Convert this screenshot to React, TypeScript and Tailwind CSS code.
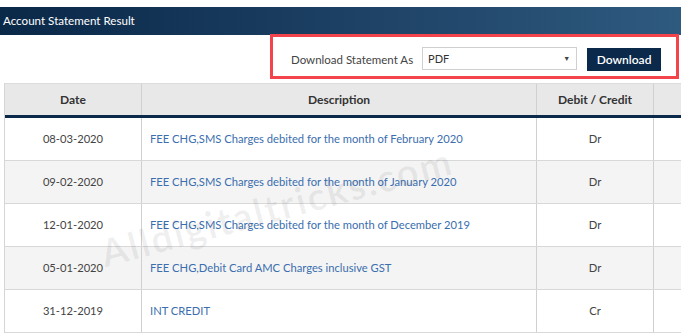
const rows = [
  { date: "08-03-2020", desc: "FEE CHG,SMS Charges debited for the month of February 2020", type: "Dr" },
  { date: "09-02-2020", desc: "FEE CHG,SMS Charges debited for the month of January 2020", type: "Dr" },
  { date: "12-01-2020", desc: "FEE CHG,SMS Charges debited for the month of December 2019", type: "Dr" },
  { date: "05-01-2020", desc: "FEE CHG,Debit Card AMC Charges inclusive GST", type: "Dr" },
  { date: "31-12-2019", desc: "INT CREDIT", type: "Cr" },
];

export default function App() {
  return (
    <div className="relative h-[336px] w-[681px] overflow-hidden bg-white pt-[7px] font-['Lato',sans-serif] text-[#333]">
      <div className="flex h-[28px] items-center bg-gradient-to-r from-[#0a2848] to-[#2f5a80] pl-[3px] text-[11.6px] text-white">
        Account Statement Result
      </div>

      <div className="-mt-px ml-[270px] flex h-[45px] w-[409px] items-start border-[3px] border-[#f2444a] pl-[18px] pt-[10px]">
        <span className="mt-[4px] text-[11.5px] text-[#444]">Download Statement As</span>
        <div className="ml-[9px] flex h-[23px] w-[155px] items-center justify-between border border-[#cfcfcf] bg-white pl-[5px] pr-[6px] text-[11px] text-[#333]">
          <span className="mt-[2px]">PDF</span>
          <span className="text-[7px] text-[#444]">▼</span>
        </div>
        <button className="ml-[10px] mt-px h-[23px] w-[74px] bg-[#0b2a4b] text-[12px] font-semibold text-white">
          Download
        </button>
      </div>

      <div className="ml-[4px] mt-[4px] border-l border-[#d6d6d6]">
        <div className="grid h-[35px] grid-cols-[137px_395px_117px_1fr] border-b-[3px] border-t border-b-[#0b2a4b] border-t-[#dcdcdc] bg-[#e8e8e8] text-[12px] font-bold text-[#333]">
          <div className="flex items-center justify-center border-r border-[#d0d0d0]">Date</div>
          <div className="flex items-center justify-center border-r border-[#d0d0d0]">Description</div>
          <div className="flex items-center justify-center border-r border-[#d0d0d0]">Debit / Credit</div>
          <div />
        </div>
        {rows.map((r, i) => (
          <div
            key={r.date}
            className={`grid h-[43px] grid-cols-[137px_395px_117px_1fr] border-b border-[#d8d8d8] text-[11.2px] ${
              i % 2 === 1 ? "bg-[#f4f4f4]" : "bg-white"
            }`}
          >
            <div className="flex items-center justify-center border-r border-[#d0d0d0] text-[#444]">{r.date}</div>
            <div className="flex items-center border-r border-[#d0d0d0] pl-[8px] text-[#3a6eae]">{r.desc}</div>
            <div className="flex items-center justify-center border-r border-[#d0d0d0] text-[#444]">{r.type}</div>
            <div />
          </div>
        ))}
      </div>

      <div className="pointer-events-none absolute left-[95px] top-[178px] -rotate-[15deg] text-[38px] font-bold tracking-[2px] text-black/[0.06]">
        Alldigitaltricks.com
      </div>
    </div>
  );
}
